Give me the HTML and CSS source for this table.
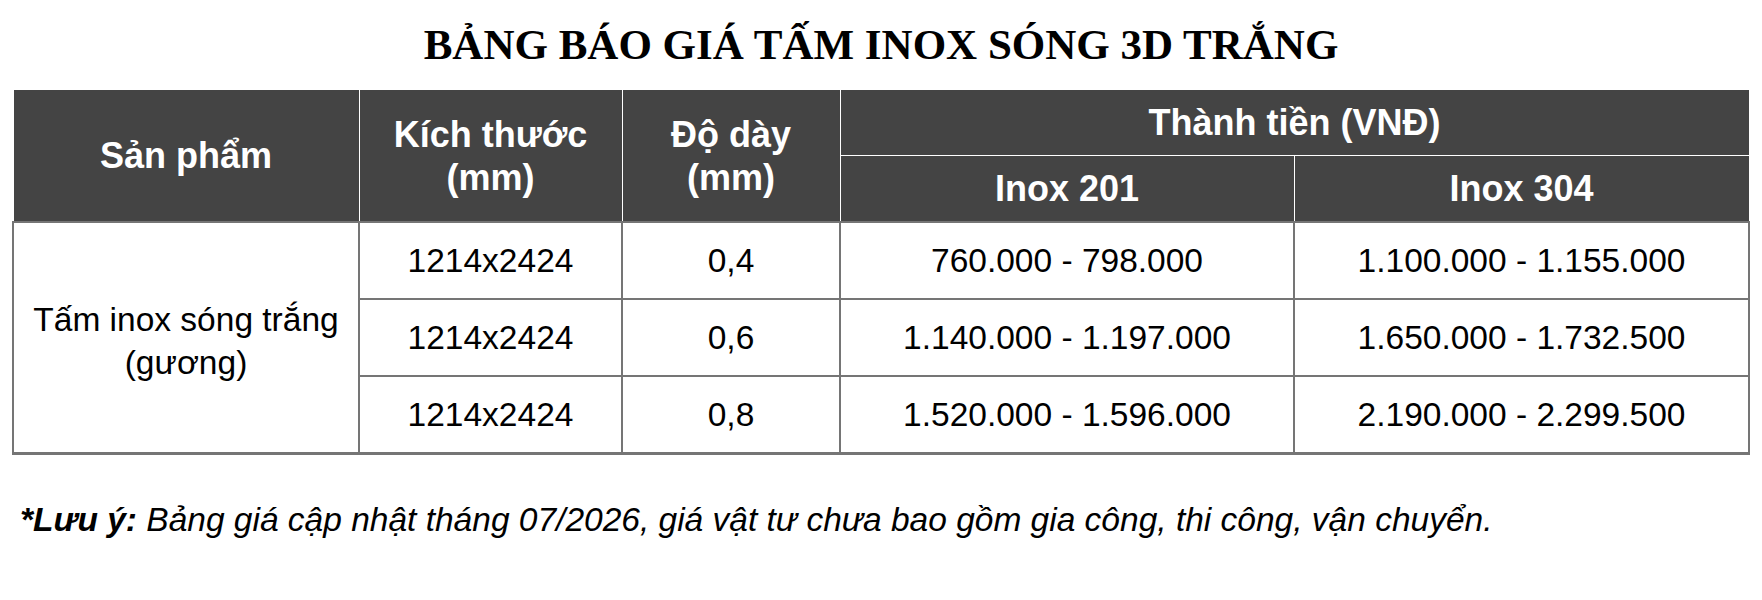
FILE: index.html
```html
<!DOCTYPE html>
<html lang="vi">
<head>
<meta charset="utf-8">
<title>Bảng báo giá tấm inox sóng 3D trắng</title>
<link rel="stylesheet" href="styles.css">
</head>
<body>
<h1 class="title">BẢNG BÁO GIÁ TẤM INOX SÓNG 3D TRẮNG</h1>
<table class="price">
  <colgroup>
    <col class="c1"><col class="c2"><col class="c3"><col class="c4"><col class="c5">
  </colgroup>
  <thead>
    <tr>
      <th rowspan="2">Sản phẩm</th>
      <th rowspan="2">Kích thước<br>(mm)</th>
      <th rowspan="2">Độ dày<br>(mm)</th>
      <th colspan="2">Thành tiền (VNĐ)</th>
    </tr>
    <tr>
      <th>Inox 201</th>
      <th>Inox 304</th>
    </tr>
  </thead>
  <tbody>
    <tr>
      <td rowspan="3" class="product">Tấm inox sóng trắng<br>(gương)</td>
      <td>1214x2424</td>
      <td>0,4</td>
      <td>760.000 - 798.000</td>
      <td>1.100.000 - 1.155.000</td>
    </tr>
    <tr>
      <td>1214x2424</td>
      <td>0,6</td>
      <td>1.140.000 - 1.197.000</td>
      <td>1.650.000 - 1.732.500</td>
    </tr>
    <tr>
      <td>1214x2424</td>
      <td>0,8</td>
      <td>1.520.000 - 1.596.000</td>
      <td>2.190.000 - 2.299.500</td>
    </tr>
  </tbody>
</table>
<p class="note"><b>*Lưu ý:</b> Bảng giá cập nhật tháng 07/2026, giá vật tư chưa bao gồm gia công, thi công, vận chuyển.</p>
</body>
</html>
```
FILE: styles.css
```css
html, body {
  margin: 0;
  padding: 0;
  background: #ffffff;
}
body {
  font-family: "Liberation Sans", Arial, sans-serif;
  color: #000;
}
.title {
  margin: 0;
  padding-top: 22px;
  height: 89px;
  box-sizing: border-box;
  text-align: center;
  font-family: "Liberation Serif", "Times New Roman", serif;
  font-weight: bold;
  font-size: 43px;
  line-height: 46px;
}
.price {
  border-collapse: collapse;
  width: 1736px;
  margin: 0 0 0 12px;
  table-layout: fixed;
}
.c1 { width: 346px; }
.c2 { width: 263px; }
.c3 { width: 218px; }
.c4 { width: 454px; }
.c5 { width: 455px; }
.price th {
  background: #444444;
  color: #ffffff;
  font-weight: bold;
  font-size: 36px;
  line-height: 43px;
  height: 65px;
  padding: 0;
  border: 1px solid #ffffff;
  text-align: center;
  vertical-align: middle;
}
.price td {
  font-size: 33.5px;
  line-height: 43px;
  height: 75px;
  padding: 0;
  border: 2px solid #757575;
  text-align: center;
  vertical-align: middle;
}
.price td.product {
  padding-top: 6px;
}
.price tbody tr:last-child td,
.price td.product {
  border-bottom: 3px solid #757575;
}
.note {
  margin: 0;
  padding: 45px 0 0 20px;
  font-size: 33.5px;
  font-style: italic;
  line-height: 40px;
}
.note b {
  font-weight: bold;
}
```
